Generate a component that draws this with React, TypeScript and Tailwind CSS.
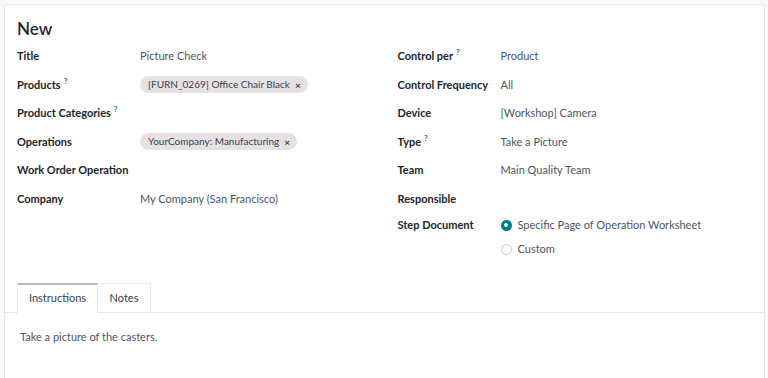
import React from 'react';

const Help = () => <sup className="ml-[3px] -top-[5px] text-[8px] font-bold text-[#017e84]">?</sup>;

const Tag = ({ label }: { label: string }) => (
  <span className="inline-flex h-[17px] items-center gap-[5px] rounded-full bg-[#e8e1e1] pl-2 pr-[7px] text-[10px] text-[#374151]">
    {label}
    <span className="text-[10px] font-bold leading-none text-[#374151]">×</span>
  </span>
);

const Row = ({ label, help, children, labelW }: { label: string; help?: boolean; children?: React.ReactNode; labelW: string }) => (
  <div className="flex h-[28.5px] items-center">
    <div className={`${labelW} shrink-0 whitespace-nowrap font-bold text-[#212529]`}>
      {label}
      {help && <Help />}
    </div>
    <div className="whitespace-nowrap text-[#4b5563]">{children}</div>
  </div>
);

const Radio = ({ checked, label }: { checked?: boolean; label: string }) => (
  <div className="flex h-[16px] items-center gap-[6px]">
    {checked ? (
      <span className="flex h-[11px] w-[11px] items-center justify-center rounded-full bg-[#017e84]">
        <span className="h-[4px] w-[4px] rounded-full bg-white" />
      </span>
    ) : (
      <span className="h-[11px] w-[11px] rounded-full border border-[#c7ccd1] bg-white" />
    )}
    <span className="text-[#4b5563]">{label}</span>
  </div>
);

export default function App() {
  return (
    <div className="h-[378px] overflow-hidden bg-[#f9fafb] pl-[4px] pr-[3px] pt-[4px] font-['Lato',sans-serif] text-[11px]">
      <div className="h-[400px] rounded-[3px] border border-[#e5e7eb] bg-white">
        <div className="px-[12px] pt-[12px]">
          <h1 className="text-[17px] font-semibold leading-[24px] text-[#1f2937]">New</h1>
          <div className="mt-px grid grid-cols-2 gap-[26px]">
            <div>
              <Row label="Title" labelW="w-[123px]">Picture Check</Row>
              <Row label="Products" help labelW="w-[123px]">
                <Tag label="[FURN_0269] Office Chair Black" />
              </Row>
              <Row label="Product Categories" help labelW="w-[123px]" />
              <Row label="Operations" labelW="w-[123px]">
                <Tag label="YourCompany: Manufacturing" />
              </Row>
              <Row label="Work Order Operation" labelW="w-[123px]" />
              <Row label="Company" labelW="w-[123px]">My Company (San Francisco)</Row>
            </div>
            <div>
              <Row label="Control per" help labelW="w-[103px]">Product</Row>
              <Row label="Control Frequency" labelW="w-[103px]">All</Row>
              <Row label="Device" labelW="w-[103px]">[Workshop] Camera</Row>
              <Row label="Type" help labelW="w-[103px]">Take a Picture</Row>
              <Row label="Team" labelW="w-[103px]">Main Quality Team</Row>
              <Row label="Responsible" labelW="w-[103px]" />
              <div className="flex pt-[4px]">
                <div className="flex h-[16px] w-[103px] shrink-0 items-center font-bold text-[#212529]">Step Document</div>
                <div className="flex flex-col gap-[8px]">
                  <Radio checked label="Specific Page of Operation Worksheet" />
                  <Radio label="Custom" />
                </div>
              </div>
            </div>
          </div>
        </div>
        <div className="mt-[26px] flex border-b border-[#e5e7eb] pl-[12px]">
          <div className="-mb-px flex h-[30px] w-[81px] items-center justify-center border-x border-t-2 border-x-[#e5e7eb] border-t-[#c9b3c3] border-b border-b-white bg-white text-[#374151]">
            Instructions
          </div>
          <div className="-mb-px flex h-[30px] w-[53px] items-center justify-center border border-l-0 border-[#e5e7eb] border-b-[#e5e7eb] text-[#374151]">
            Notes
          </div>
        </div>
        <div className="px-[15px] pt-[16px] text-[#4b5563]">Take a picture of the casters.</div>
      </div>
    </div>
  );
}
